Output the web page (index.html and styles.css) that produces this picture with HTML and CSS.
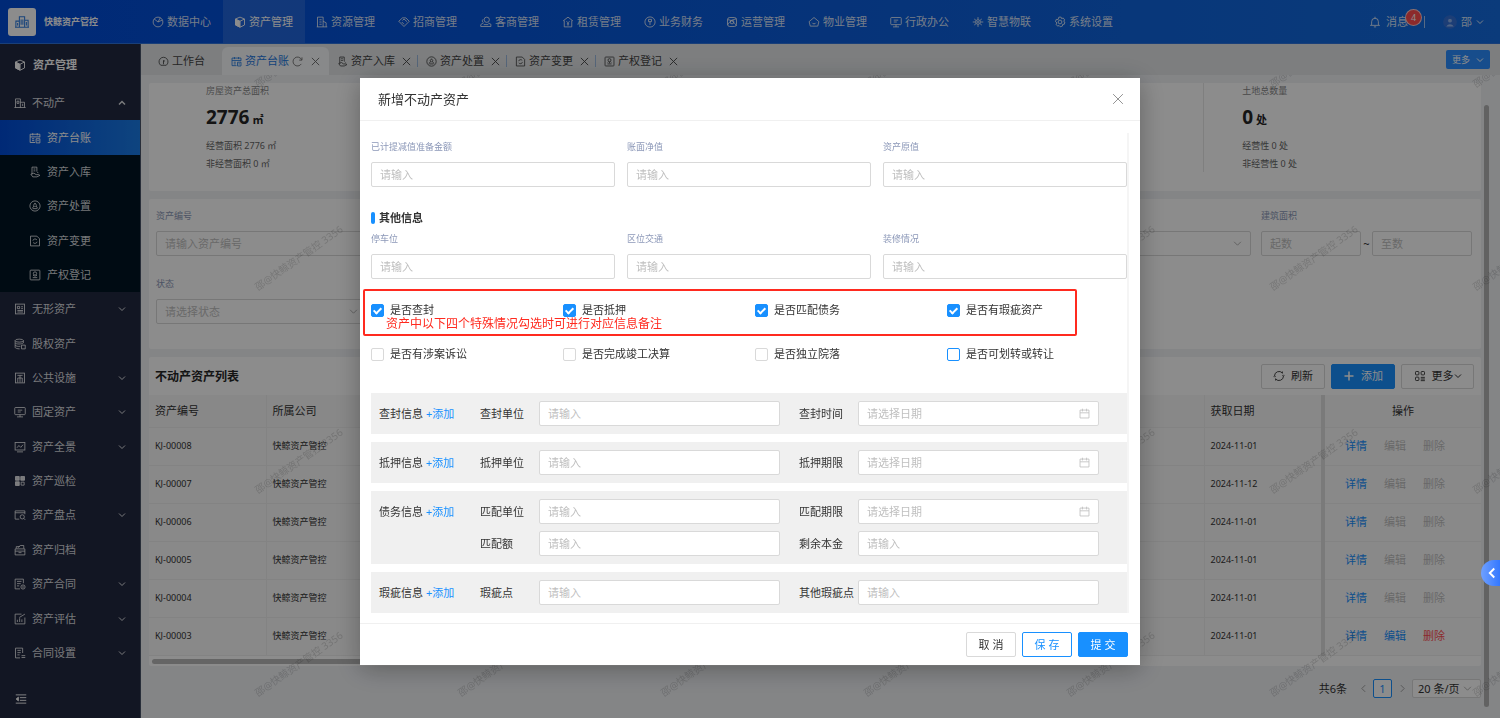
FILE: index.html
```html
<!DOCTYPE html>
<html lang="zh-CN">
<head>
    <meta charset="UTF-8">
    <meta name="viewport" content="width=device-width, initial-scale=1.0">
    <title>快鲸资产管控</title>
    <link rel="stylesheet" href="styles.css">
</head>
<body>
    <!-- icon sprite -->
    <svg class="sprite" xmlns="http://www.w3.org/2000/svg">
        <symbol id="i-logo" viewBox="0 0 16 16"><path d="M1 14V7h4M5 14V2h6v12M11 6h4v8M0 14h16M7 5v6M9 5v6M3 9v3M13 8v4"/></symbol>
        <symbol id="i-pie" viewBox="0 0 16 16"><circle cx="8" cy="8" r="6.500"/><path d="M3 4l5 4 5.500-2.500M8 8l3-5.500"/></symbol>
        <symbol id="i-cube" viewBox="0 0 16 16"><path class="fill" d="M2 4.500l5.500 2.500v7.500L2 12z"/><path d="M8 1.500l6 2.500v8l-6 3-6-3V4zM2 4l6 3 6-3M8 7v8"/></symbol>
        <symbol id="i-building" viewBox="0 0 16 16"><path d="M2 14.500v-13h7.500v13M9.500 7l4 2v5.500M1 14.500h14M4.500 5h3M4.500 8h3M4.500 11h3"/></symbol>
        <symbol id="i-hand" viewBox="0 0 16 16"><path d="M1 7l5-4.500h4.500L15 7l-7 7zM6 6l2-2 4 3.500M5 8l3 3"/></symbol>
        <symbol id="i-user" viewBox="0 0 16 16"><circle cx="9" cy="5" r="3.500"/><path d="M4 4.500C2.500 6 3 8 4.500 9L1 11.500V14h13.500v-3L11 9.500M5 11.500h6"/></symbol>
        <symbol id="i-home" viewBox="0 0 16 16"><path d="M1.500 6.500L8 1.500l6.500 5M3 6v8.500h10V6M6 7l2 2 2-2M8 9v4M6.500 10.500h3"/></symbol>
        <symbol id="i-coin" viewBox="0 0 16 16"><circle cx="8" cy="8" r="6.800"/><path d="M6 4.500h4v3H6zM8 7.500V12"/></symbol>
        <symbol id="i-atom" viewBox="0 0 16 16"><rect x="2" y="2" width="12" height="12" rx="3"/><path d="M2 5c6 0 9 4 12 8M14 4C9 4 4 8 2 12"/><circle cx="8" cy="8" r="2.500"/></symbol>
        <symbol id="i-house" viewBox="0 0 16 16"><path d="M8 2l6.500 5.500L13 13.500H3L1.500 7.500zM5.500 9c1 2 4 2 5 0"/></symbol>
        <symbol id="i-screen" viewBox="0 0 16 16"><rect x="1" y="2" width="14" height="9.500" rx="1"/><path d="M8 11.500v3M4 14.500h8M5 5.500h6M5 8h4"/></symbol>
        <symbol id="i-iot" viewBox="0 0 16 16"><circle cx="8" cy="8" r="3"/><circle cx="8" cy="8" r=".8"/><path d="M8 1.500V5M8 11v3.500M1 8h4M11 8h4M3 4l2.500 2M13 4l-2.500 2M3 12l2.500-2M13 12l-2.500-2"/></symbol>
        <symbol id="i-gear" viewBox="0 0 16 16"><circle cx="8" cy="8" r="2.500"/><path d="M6.500 1.500h3l.6 2 2.200-.8 2 2.600-1.500 1.700 1.700 1-.8 3-2.200.2-.2 2.200-3 1-1.500-1.700-2 .8-2-2.500 1.200-1.700L2 7.500l1-3 2.500.2z"/></symbol>
        <symbol id="i-bell" viewBox="0 0 16 16"><path d="M8 1v2M3.500 12V7.500a4.500 4.500 0 019 0V12M1.500 12.500h13M6.500 14.500h3"/></symbol>
        <symbol id="i-avatar" viewBox="0 0 16 16"><circle class="fill" cx="8" cy="8" r="7.200"/><circle class="face" cx="8" cy="6.500" r="2.800"/><path class="face" d="M3.500 13c1-4 8-4 9 0"/></symbol>
        <symbol id="i-down" viewBox="0 0 16 16"><path d="M2 5l6 6 6-6"/></symbol>
        <symbol id="i-up" viewBox="0 0 16 16"><path d="M2 11l6-6 6 6"/></symbol>
        <symbol id="i-left" viewBox="0 0 16 16"><path d="M11 2L5 8l6 6"/></symbol>
        <symbol id="i-right" viewBox="0 0 16 16"><path d="M5 2l6 6-6 6"/></symbol>
        <symbol id="i-close" viewBox="0 0 16 16"><path d="M1.500 1.500l13 13M14.500 1.500l-13 13"/></symbol>
        <symbol id="i-reload" viewBox="0 0 16 16"><path d="M13.500 11.500a6.500 6.500 0 11.500-6M14.500 2v4h-4"/></symbol>
        <symbol id="i-dash" viewBox="0 0 16 16"><path d="M4 13.500a6.500 6.500 0 118 0zM8 12V6M8 9l1.500-2.500"/></symbol>
        <symbol id="i-ledger" viewBox="0 0 16 16"><path d="M14.500 7V3h-13v11H8M1.500 6.500h13M5 1.500v3M11 1.500v3M4 9h3M4 11.500h3M9.500 9h5v5.500h-5zM11 11.500h2"/></symbol>
        <symbol id="i-in" viewBox="0 0 16 16"><path d="M4 11V1.500h6.500v6M6 4h2.500M6 6.500h2.500M2.500 11l4-1.500 3 2h3.500l1.500 1-4 2H5zM11 8l1.500 1.500"/></symbol>
        <symbol id="i-deal" viewBox="0 0 16 16"><circle cx="8" cy="8" r="6.800"/><path d="M8 4l2 3-2 2-2-2zM4.500 11l2-3M11.500 11l-2-3M5 11.500h6"/></symbol>
        <symbol id="i-change" viewBox="0 0 16 16"><path d="M2 1.500h8.500L14 5v9.500H2zM5.200 7.500a3 3 0 015.300-1M10.800 9a3 3 0 01-5.300 1"/></symbol>
        <symbol id="i-reg" viewBox="0 0 16 16"><rect x="1.500" y="1.500" width="13" height="13" rx="1"/><circle cx="8" cy="6" r="2.200"/><path d="M8 8.500v2M5 11.500h6M5.500 9.500l1-1.500M10.500 9.500l-1-1.500"/></symbol>
        <symbol id="i-estate" viewBox="0 0 16 16"><path d="M2 14V2.500h6.500V14M8.500 7H14v7M0.500 14h15M4 5.500h2.500v3H4zM11.500 9v3"/></symbol>
        <symbol id="i-book" viewBox="0 0 16 16"><rect x="2" y="1.500" width="12" height="13"/><path d="M4.500 4.500h3v3h-3zM9.500 5h2.500M9.500 7.500h2.500M4.500 10h7.500M4.500 12h7.500"/></symbol>
        <symbol id="i-stock" viewBox="0 0 16 16"><ellipse cx="7" cy="3.500" rx="5.500" ry="2"/><path d="M1.500 3.500v9c0 1 3 2 6 2M1.500 6.500c1 2 9 2 11 0v-3M1.500 9.500c1 1.500 4 2 7 1.500M10 9.500h5v5h-5z"/></symbol>
        <symbol id="i-public" viewBox="0 0 16 16"><rect x="2" y="1.500" width="12" height="13"/><path d="M5 14V8M8 14V4.500M11 14V8M5 8h6M4.500 4.500h7"/></symbol>
        <symbol id="i-chart" viewBox="0 0 16 16"><rect x="1.500" y="2" width="13" height="10"/><path d="M4 9l2.500-3L9 8.500 12 5M4 14.500h8"/></symbol>
        <symbol id="i-grid" viewBox="0 0 16 16"><path class="fill" d="M2 2h5v5H2zM9 2h5v5H9zM2 9h5v5H2z"/><path d="M9.500 9.500h4v4h-4z"/></symbol>
        <symbol id="i-check" viewBox="0 0 16 16"><path d="M14.500 7V2.500h-13v11H7M1.500 5h13"/><circle cx="11" cy="10.500" r="2.800"/><path d="M13 12.500l2 2"/></symbol>
        <symbol id="i-archive" viewBox="0 0 16 16"><path d="M1.500 6.500h13v8h-13zM1.500 9.500h13M6 11.500h4M3 6V3.500h4L8.500 2H13v4M5 5l3-2.500"/></symbol>
        <symbol id="i-contract" viewBox="0 0 16 16"><path d="M12.500 7V1.500h-11v13H8M4 4.500h6M4 7.500h5M4 10.500h3"/><circle cx="12" cy="12" r="2.800"/><path d="M12 10.500v3"/></symbol>
        <symbol id="i-assess" viewBox="0 0 16 16"><path d="M10 1.500H1.500v13h13V6M4.500 12V9M7.500 12V7M10.500 12V8.500M7 6l7.500-4.500"/></symbol>
        <symbol id="i-set" viewBox="0 0 16 16"><path d="M11.500 8V1.500H2v13h6M4.500 4.500h4.500M4.500 7.500h4.500M4.500 10.500h3M10 11.500h5M10 14h5"/></symbol>
        <symbol id="i-fold" viewBox="0 0 16 16"><path d="M1 2.500h14M6.500 6.200H15M6.500 9.800H15M1 13.500h14"/><path class="fill" d="M4.500 5.500v5L1.500 8z"/></symbol>
        <symbol id="i-refresh" viewBox="0 0 16 16"><path d="M2 8a6 6 0 0110.500-4M14 8a6 6 0 01-10.500 4M12.500 2v2.500M3.500 14v-2.500M1 8.500l1 1 1.500-1.500M15 7.500l-1-1L12.500 8"/></symbol>
        <symbol id="i-plus" viewBox="0 0 16 16"><path d="M8 2v12M2 8h12"/></symbol>
        <symbol id="i-apps" viewBox="0 0 16 16"><rect x="2" y="2" width="4.500" height="4.500" rx="1"/><rect x="9.500" y="2" width="4.500" height="4.500" rx="1"/><rect x="2" y="9.500" width="4.500" height="4.500" rx="1"/><path d="M9 9.800h5.500M9 12h5.500M9 14.200h5.500"/></symbol>
        <symbol id="i-date" viewBox="0 0 16 16"><path d="M1.500 3h13v11.500h-13zM1.500 7h13M5 1v4M11 1v4"/></symbol>
    </svg>

    <div class="app">
        <header class="header">
            <div class="brand">
                <span class="logo"><svg><use href="#i-logo"/></svg></span>
                <strong>快鲸资产管控</strong>
            </div>
            <nav class="nav">
                <a href="#"><svg><use href="#i-pie"/></svg>数据中心</a>
                <a href="#" class="active"><svg><use href="#i-cube"/></svg>资产管理</a>
                <a href="#"><svg><use href="#i-building"/></svg>资源管理</a>
                <a href="#"><svg><use href="#i-hand"/></svg>招商管理</a>
                <a href="#"><svg><use href="#i-user"/></svg>客商管理</a>
                <a href="#"><svg><use href="#i-home"/></svg>租赁管理</a>
                <a href="#"><svg><use href="#i-coin"/></svg>业务财务</a>
                <a href="#"><svg><use href="#i-atom"/></svg>运营管理</a>
                <a href="#"><svg><use href="#i-house"/></svg>物业管理</a>
                <a href="#"><svg><use href="#i-screen"/></svg>行政办公</a>
                <a href="#"><svg><use href="#i-iot"/></svg>智慧物联</a>
                <a href="#"><svg><use href="#i-gear"/></svg>系统设置</a>
            </nav>
            <div class="account">
                <a href="#" class="message"><svg><use href="#i-bell"/></svg>消息<span class="badge">4</span></a>
                <a href="#" class="profile"><svg class="avatar"><use href="#i-avatar"/></svg>邵<svg class="arrow"><use href="#i-down"/></svg></a>
            </div>
        </header>

        <div class="main">
            <aside class="sidebar">
                <div class="side-title"><svg><use href="#i-cube"/></svg>资产管理</div>
                <nav class="menu">
                    <a href="#"><svg><use href="#i-estate"/></svg>不动产<svg class="arrow open"><use href="#i-up"/></svg></a>
                    <div class="submenu">
                        <a href="#" class="active"><svg><use href="#i-ledger"/></svg>资产台账</a>
                        <a href="#"><svg><use href="#i-in"/></svg>资产入库</a>
                        <a href="#"><svg><use href="#i-deal"/></svg>资产处置</a>
                        <a href="#"><svg><use href="#i-change"/></svg>资产变更</a>
                        <a href="#"><svg><use href="#i-reg"/></svg>产权登记</a>
                    </div>
                    <a href="#"><svg><use href="#i-book"/></svg>无形资产<svg class="arrow"><use href="#i-down"/></svg></a>
                    <a href="#"><svg><use href="#i-stock"/></svg>股权资产</a>
                    <a href="#"><svg><use href="#i-public"/></svg>公共设施<svg class="arrow"><use href="#i-down"/></svg></a>
                    <a href="#"><svg><use href="#i-screen"/></svg>固定资产<svg class="arrow"><use href="#i-down"/></svg></a>
                    <a href="#"><svg><use href="#i-chart"/></svg>资产全景<svg class="arrow"><use href="#i-down"/></svg></a>
                    <a href="#"><svg><use href="#i-grid"/></svg>资产巡检</a>
                    <a href="#"><svg><use href="#i-check"/></svg>资产盘点<svg class="arrow"><use href="#i-down"/></svg></a>
                    <a href="#"><svg><use href="#i-archive"/></svg>资产归档</a>
                    <a href="#"><svg><use href="#i-contract"/></svg>资产合同<svg class="arrow"><use href="#i-down"/></svg></a>
                    <a href="#"><svg><use href="#i-assess"/></svg>资产评估<svg class="arrow"><use href="#i-down"/></svg></a>
                    <a href="#"><svg><use href="#i-set"/></svg>合同设置<svg class="arrow"><use href="#i-down"/></svg></a>
                </nav>
                <button type="button" class="fold" aria-label="收起"><svg><use href="#i-fold"/></svg></button>
            </aside>

            <div class="page">
                <div class="tabs">
                    <a href="#" class="tab first"><svg><use href="#i-dash"/></svg>工作台</a>
                    <a href="#" class="tab active"><svg><use href="#i-ledger"/></svg>资产台账<svg class="reload"><use href="#i-reload"/></svg><svg class="close"><use href="#i-close"/></svg></a>
                    <a href="#" class="tab"><svg><use href="#i-in"/></svg>资产入库<svg class="close"><use href="#i-close"/></svg></a>
                    <a href="#" class="tab"><svg><use href="#i-deal"/></svg>资产处置<svg class="close"><use href="#i-close"/></svg></a>
                    <a href="#" class="tab"><svg><use href="#i-change"/></svg>资产变更<svg class="close"><use href="#i-close"/></svg></a>
                    <a href="#" class="tab"><svg><use href="#i-reg"/></svg>产权登记<svg class="close"><use href="#i-close"/></svg></a>
                    <button type="button" class="tabs-more">更多<svg><use href="#i-down"/></svg></button>
                </div>

                <div class="content">
                    <section class="card stats">
                        <div class="stat">
                            <div class="stat-name">房屋资产总面积</div>
                            <div class="stat-value">2776 <small>㎡</small></div>
                            <p>经营面积 2776 ㎡</p>
                            <p>非经营面积 0 ㎡</p>
                        </div>
                        <div class="stat"></div>
                        <div class="stat"></div>
                        <div class="stat"></div>
                        <div class="stat">
                            <div class="stat-name">土地总数量</div>
                            <div class="stat-value">0 <small>处</small></div>
                            <p>经营性 0 处</p>
                            <p>非经营性 0 处</p>
                        </div>
                    </section>

                    <section class="card filters">
                        <div class="filter">
                            <label for="code">资产编号</label>
                            <input type="text" id="code" class="input" placeholder="请输入资产编号">
                        </div>
                        <div class="filter filter-type">
                            <div class="select">
                                <select class="input" aria-label="类型"><option></option></select>
                                <svg><use href="#i-down"/></svg>
                            </div>
                        </div>
                        <div class="filter filter-area">
                            <label for="area-min">建筑面积</label>
                            <div class="range">
                                <input type="text" id="area-min" class="input" placeholder="起数">
                                <span>~</span>
                                <input type="text" class="input" placeholder="至数" aria-label="至数">
                            </div>
                        </div>
                        <div class="filter">
                            <label for="state">状态</label>
                            <div class="select">
                                <select id="state" class="input"><option>请选择状态</option></select>
                                <svg><use href="#i-down"/></svg>
                            </div>
                        </div>
                    </section>

                    <section class="card list">
                        <div class="list-head">
                            <h2>不动产资产列表</h2>
                            <button type="button" class="btn"><svg><use href="#i-refresh"/></svg>刷新</button>
                            <button type="button" class="btn primary"><svg><use href="#i-plus"/></svg>添加</button>
                            <button type="button" class="btn wide"><svg><use href="#i-apps"/></svg><span>更多<svg class="caret"><use href="#i-down"/></svg></span></button>
                        </div>
                        <table>
                            <colgroup><col class="c-code"><col class="c-company"><col><col class="c-date"><col class="c-action"></colgroup>
                            <thead>
                                <tr><th>资产编号</th><th>所属公司</th><th></th><th>获取日期</th><th class="action">操作</th></tr>
                            </thead>
                            <tbody>
                                <tr><td>KJ-00008</td><td>快鲸资产管控</td><td></td><td>2024-11-01</td><td class="action"><a href="#">详情</a><a class="off">编辑</a><a class="off">删除</a></td></tr>
                                <tr><td>KJ-00007</td><td>快鲸资产管控</td><td></td><td>2024-11-12</td><td class="action"><a href="#">详情</a><a class="off">编辑</a><a class="off">删除</a></td></tr>
                                <tr><td>KJ-00006</td><td>快鲸资产管控</td><td></td><td>2024-11-01</td><td class="action"><a href="#">详情</a><a class="off">编辑</a><a class="off">删除</a></td></tr>
                                <tr><td>KJ-00005</td><td>快鲸资产管控</td><td></td><td>2024-11-01</td><td class="action"><a href="#">详情</a><a class="off">编辑</a><a class="off">删除</a></td></tr>
                                <tr><td>KJ-00004</td><td>快鲸资产管控</td><td></td><td>2024-11-01</td><td class="action"><a href="#">详情</a><a class="off">编辑</a><a class="off">删除</a></td></tr>
                                <tr><td>KJ-00003</td><td>快鲸资产管控</td><td></td><td>2024-11-01</td><td class="action"><a href="#">详情</a><a href="#">编辑</a><a href="#" class="danger">删除</a></td></tr>
                            </tbody>
                        </table>
                        <div class="hscroll"></div>
                    </section>

                    <div class="pager">
                        <span>共6条</span>
                        <button type="button" class="turn" aria-label="上一页"><svg><use href="#i-left"/></svg></button>
                        <button type="button" class="num">1</button>
                        <button type="button" class="turn" aria-label="下一页"><svg><use href="#i-right"/></svg></button>
                        <div class="select">
                            <select class="input" aria-label="每页条数"><option>20 条/页</option></select>
                            <svg><use href="#i-down"/></svg>
                        </div>
                    </div>
                </div>
                <div class="vscroll"></div>

                <svg class="watermark" aria-hidden="true">
                    <defs>
                        <pattern id="wm" width="203" height="203" patternUnits="userSpaceOnUse" x="113" y="41">
                            <text x="4" y="175" transform="rotate(-35 4 175)">邵@快鲸资产管控 3356</text>
                        </pattern>
                    </defs>
                    <rect width="100%" height="100%" fill="url(#wm)"/>
                </svg>
            </div>
        </div>
    </div>

    <div class="mask">
        <div class="modal" role="dialog" aria-labelledby="modal-title">
            <div class="modal-head">
                <h3 id="modal-title">新增不动产资产</h3>
                <button type="button" class="modal-close" aria-label="关闭"><svg><use href="#i-close"/></svg></button>
            </div>
            <form class="modal-body">
                <div class="fields">
                    <div class="field"><label for="f1">已计提减值准备金额</label><input type="text" id="f1" class="input" placeholder="请输入"></div>
                    <div class="field"><label for="f2">账面净值</label><input type="text" id="f2" class="input" placeholder="请输入"></div>
                    <div class="field"><label for="f3">资产原值</label><input type="text" id="f3" class="input" placeholder="请输入"></div>
                </div>
                <h4>其他信息</h4>
                <div class="fields">
                    <div class="field"><label for="f4">停车位</label><input type="text" id="f4" class="input" placeholder="请输入"></div>
                    <div class="field"><label for="f5">区位交通</label><input type="text" id="f5" class="input" placeholder="请输入"></div>
                    <div class="field"><label for="f6">装修情况</label><input type="text" id="f6" class="input" placeholder="请输入"></div>
                </div>
                <div class="checks">
                    <label><input type="checkbox" checked>是否查封</label>
                    <label><input type="checkbox" checked>是否抵押</label>
                    <label><input type="checkbox" checked>是否匹配债务</label>
                    <label><input type="checkbox" checked>是否有瑕疵资产</label>
                    <label><input type="checkbox">是否有涉案诉讼</label>
                    <label><input type="checkbox">是否完成竣工决算</label>
                    <label><input type="checkbox">是否独立院落</label>
                    <label><input type="checkbox" class="hover">是否可划转或转让</label>
                    <div class="note">资产中以下四个特殊情况勾选时可进行对应信息备注</div>
                </div>

                <div class="blocks">
                    <div class="block">
                        <div class="block-name">查封信息 <a href="#">+添加</a></div>
                        <label for="b1">查封单位</label><input type="text" id="b1" class="input" placeholder="请输入">
                        <label for="b2">查封时间</label><div class="date"><input type="text" id="b2" class="input" placeholder="请选择日期"><svg><use href="#i-date"/></svg></div>
                    </div>
                    <div class="block">
                        <div class="block-name">抵押信息 <a href="#">+添加</a></div>
                        <label for="b3">抵押单位</label><input type="text" id="b3" class="input" placeholder="请输入">
                        <label for="b4">抵押期限</label><div class="date"><input type="text" id="b4" class="input" placeholder="请选择日期"><svg><use href="#i-date"/></svg></div>
                    </div>
                    <div class="block">
                        <div class="block-name">债务信息 <a href="#">+添加</a></div>
                        <label for="b5">匹配单位</label><input type="text" id="b5" class="input" placeholder="请输入">
                        <label for="b6">匹配期限</label><div class="date"><input type="text" id="b6" class="input" placeholder="请选择日期"><svg><use href="#i-date"/></svg></div>
                        <label for="b7" class="next">匹配额</label><input type="text" id="b7" class="input" placeholder="请输入">
                        <label for="b8">剩余本金</label><input type="text" id="b8" class="input" placeholder="请输入">
                    </div>
                    <div class="block">
                        <div class="block-name">瑕疵信息 <a href="#">+添加</a></div>
                        <label for="b9">瑕疵点</label><input type="text" id="b9" class="input" placeholder="请输入">
                        <label for="b10">其他瑕疵点</label><input type="text" id="b10" class="input" placeholder="请输入">
                    </div>
                </div>
            </form>
            <div class="modal-foot">
                <button type="button" class="btn">取 消</button>
                <button type="button" class="btn ghost">保 存</button>
                <button type="button" class="btn primary">提 交</button>
            </div>
        </div>
    </div>

    <button type="button" class="drawer" aria-label="展开"><svg><use href="#i-left"/></svg></button>
</body>
</html>
```

FILE: styles.css
```css
* {
    box-sizing: border-box;
}
body {
    margin: 0;
    font-family: "Noto Sans", "Noto Sans CJK SC", sans-serif;
    font-size: 11px;
    line-height: 16px;
    color: #333;
    overflow: hidden;
}
a {
    color: inherit;
    text-decoration: none;
}
h2, h3, h4, p {
    margin: 0;
}
button, input, select {
    font: inherit;
    margin: 0;
}
svg {
    width: 12px;
    height: 12px;
    flex: none;
    fill: none;
    stroke: currentColor;
    stroke-width: 1.2;
}
.sprite {
    display: none;
}
.fill {
    fill: currentColor;
}
.app {
    display: flex;
    flex-direction: column;
    height: 100vh;
}

/* header */
.header {
    display: flex;
    align-items: center;
    height: 44px;
    flex: none;
    color: rgba(255,255,255,0.85);
    background: linear-gradient(90deg, #004cd8, #146ce0);
    border-bottom: 1px solid #2f73dc;
}
.brand {
    display: flex;
    align-items: center;
    gap: 8px;
    width: 141px;
    padding-left: 8px;
    font-size: 9px;
    color: #fff;
}
.logo {
    display: flex;
    align-items: center;
    justify-content: center;
    width: 28px;
    height: 28px;
    border-radius: 3px;
    background: #fff;
    color: #2f7de0;
}
.logo svg {
    width: 14px;
    height: 14px;
}
.nav {
    display: flex;
    height: 100%;
}
.nav a {
    display: flex;
    align-items: center;
    gap: 3px;
    width: 82px;
    padding-left: 11px;
}
.nav .active {
    background: rgba(255,255,255,0.12);
    color: #fff;
}
.account {
    display: flex;
    align-items: center;
    margin-left: auto;
    padding-right: 16px;
}
.message {
    display: flex;
    align-items: center;
    gap: 5px;
    position: relative;
    padding-right: 16px;
    border-right: 1px solid rgba(255,255,255,0.6);
    line-height: 12px;
}
.badge {
    position: absolute;
    right: 2px;
    top: -7px;
    width: 17px;
    height: 17px;
    border: 1px solid rgba(255,255,255,0.7);
    border-radius: 50%;
    background: #ff4d4f;
    color: #fff;
    font-size: 9px;
    line-height: 15px;
    text-align: center;
}
.profile {
    display: flex;
    align-items: center;
    gap: 4px;
    margin-left: 18px;
}
.avatar {
    width: 14px;
    height: 14px;
    color: #3471d8;
}
.face {
    fill: #8fb4f0;
}
.profile .arrow {
    width: 8px;
    height: 8px;
    stroke-width: 2;
}

/* sidebar */
.main {
    display: flex;
    flex: 1;
    min-height: 0;
}
.sidebar {
    display: flex;
    flex-direction: column;
    width: 141px;
    flex: none;
    background: #212840;
    color: rgba(255,255,255,0.85);
    border-right: 1px solid #4a5468;
}
.side-title {
    display: flex;
    align-items: center;
    gap: 7px;
    height: 42px;
    padding-left: 14px;
    color: #fff;
    font-weight: bold;
}
.menu {
    display: flex;
    flex-direction: column;
    flex: 1;
}
.menu a {
    display: flex;
    align-items: center;
    gap: 6px;
    flex: 1;
    padding: 0 14px;
}
.menu svg {
    width: 12px;
    height: 12px;
}
.menu .arrow {
    width: 8px;
    height: 8px;
    margin-left: auto;
    stroke-width: 2;
}
.menu .open {
    stroke-width: 3;
}
.submenu {
    display: flex;
    flex-direction: column;
    flex: 5;
    background: #001424;
}
.submenu a {
    padding-left: 29px;
}
.submenu .active {
    color: #fff;
    background: linear-gradient(90deg, #004cd8, #1a7ce8);
}
.fold {
    display: flex;
    align-items: center;
    height: 48px;
    padding: 9px 0 0 15px;
    border: 0;
    background: none;
    color: #fff;
}

/* page tabs */
.page {
    display: flex;
    flex-direction: column;
    flex: 1;
    min-width: 0;
    position: relative;
    background: #f0f2f5;
}
.tabs {
    display: flex;
    align-items: flex-end;
    height: 31px;
    flex: none;
    padding-right: 10px;
    background: #e3e6e8;
    color: #444;
}
.tab {
    display: flex;
    align-items: center;
    gap: 3px;
    width: 89px;
    height: 28px;
    padding-left: 8px;
}
.tab svg {
    width: 11px;
    height: 11px;
}
.tab .close {
    width: 9px;
    height: 9px;
    margin-left: 4px;
    stroke-width: 1.6;
}
.tab.first {
    width: 81px;
    padding-left: 17px;
}
.tab.active {
    width: 107px;
    padding-left: 9px;
    border-radius: 6px 6px 0 0;
    background: #f8f9fb;
    color: #1f78e0;
}
.tab.active svg:not(:first-child) {
    color: #666;
}
.tab.active .close {
    margin-left: 5px;
}
.tab + .tab:not(.active) {
    background: linear-gradient(#9bb9de, #9bb9de) right center / 1px 12px no-repeat;
}
.tab.tab:nth-of-type(6) {
    background: none;
}
.tabs-more {
    display: flex;
    align-items: center;
    gap: 6px;
    height: 19px;
    margin: 0 0 6px auto;
    padding: 0 6px;
    border: 0;
    border-radius: 2px;
    background: #2a8cff;
    color: #fff;
    font-size: 9px;
}
.tabs-more svg {
    width: 8px;
    height: 8px;
    stroke-width: 2;
}

/* content */
.content {
    display: flex;
    flex-direction: column;
    gap: 8px;
    padding: 8px 19px 0 8px;
}
.card {
    background: #fff;
    border-radius: 2px;
}
.input {
    display: block;
    width: 100%;
    min-width: 0;
    height: 25px;
    padding: 0 8px;
    border: 1px solid #d9d9d9;
    border-radius: 2px;
    background: #fff;
    color: #333;
    outline: none;
    appearance: none;
}
.input::placeholder {
    color: #bfbfbf;
}
.select {
    position: relative;
}
.select .input {
    color: #bfbfbf;
}
.select svg, .date svg {
    position: absolute;
    right: 9px;
    top: 8px;
    width: 9px;
    height: 9px;
    color: #aaa;
    stroke-width: 1.6;
    pointer-events: none;
}
.stats {
    display: grid;
    grid-template-columns: repeat(5, 1fr);
    height: 108px;
    padding: 0 19px;
    font-size: 9px;
}
.stat {
    height: 89px;
    padding-left: 38px;
    color: #666;
}
.stat + .stat {
    border-left: 1px solid #e8e8e8;
}
.stat-name {
    color: #888;
}
.stat-value {
    margin: 6px 0 5px;
    font-size: 19px;
    line-height: 24px;
    font-weight: bold;
    color: #262626;
}
.stat-value small {
    font-size: 11px;
    margin-left: -2px;
}
.stat p {
    line-height: 18px;
}
.filters {
    display: grid;
    grid-template-columns: repeat(6, 1fr);
    grid-template-rows: 68px 1fr;
    gap: 0 10px;
    height: 150px;
    padding: 9px 9px 0 7px;
}
.filter label, .field label {
    display: block;
    margin-bottom: 7px;
    font-size: 9px;
    color: #8c98b8;
}
.filter-type {
    grid-column: 5;
    padding-top: 23px;
}
.filter-area {
    grid-column: 6;
}
.range {
    display: grid;
    grid-template-columns: 1fr 11px 1fr;
    align-items: center;
    text-align: center;
}
.list {
    height: 309px;
}
.list-head {
    display: flex;
    align-items: center;
    gap: 6px;
    height: 38px;
    padding: 0 7px 0 6px;
}
.list-head h2 {
    margin-right: auto;
    padding-top: 2px;
    font-size: 12px;
    color: #262626;
}
.btn {
    display: flex;
    align-items: center;
    justify-content: center;
    gap: 6px;
    width: 64px;
    height: 25px;
    padding: 0;
    border: 1px solid #d9d9d9;
    border-radius: 2px;
    background: #fff;
    color: #333;
}
.btn.primary {
    border-color: #1890ff;
    background: #1890ff;
    color: #fff;
}
.btn.primary svg {
    stroke-width: 2;
}
.btn.ghost {
    border-color: #1890ff;
    color: #1890ff;
}
.btn.wide {
    width: 73px;
}
.btn .caret {
    width: 8px;
    height: 8px;
    stroke-width: 2;
}
table {
    width: 100%;
    table-layout: fixed;
    border-collapse: collapse;
    background: #fafafa;
}
.c-code {
    width: 117px;
}
.c-company {
    width: 160px;
}
.c-date {
    width: 119px;
}
.c-action {
    width: 158px;
}
th, td {
    height: 38px;
    padding: 0 6px;
    border-bottom: 1px solid #efefef;
    border-right: 1px solid #efefef;
    text-align: left;
    font-size: 9px;
}
th {
    height: 32px;
    font-size: 11px;
    font-weight: normal;
    background: #f7f7f7;
}
.action {
    border-left: 4px solid #dedede;
    border-right: 0;
    padding: 0;
    text-align: center;
    font-size: 11px;
}
td.action {
    padding-right: 16px;
}
.action a {
    color: #1890ff;
}
.action a + a {
    margin-left: 17px;
}
.action .off {
    color: #bfbfbf;
}
.action .danger {
    color: #ff4d4f;
}
.hscroll {
    width: 60%;
    height: 5px;
    margin: 3px 3px 0;
    border-radius: 3px;
    background: #b8b8b8;
}
.vscroll {
    position: absolute;
    right: 11px;
    top: 61px;
    bottom: 11px;
    width: 5px;
    border-radius: 3px;
    background: #b3b3b3;
}
.pager {
    display: flex;
    align-items: center;
    justify-content: flex-end;
    gap: 6px;
    padding-top: 5px;
}
.pager .turn, .pager .num {
    display: flex;
    align-items: center;
    justify-content: center;
    width: 8px;
    height: 19px;
    padding: 0;
    border: 0;
    background: none;
    color: #999;
}
.pager span {
    margin-right: 6px;
}
.pager .turn svg {
    width: 9px;
    height: 9px;
    stroke-width: 1.6;
}
.pager .num {
    width: 19px;
    border: 1px solid #1890ff;
    border-radius: 2px;
    background: #fff;
    color: #1890ff;
}
.pager .input {
    width: 69px;
    height: 19px;
    padding: 0 5px;
    color: #333;
}
.pager .select svg {
    top: 5px;
}
.watermark {
    position: absolute;
    left: 0;
    top: 31px;
    width: 100%;
    height: calc(100% - 31px);
    stroke: none;
    pointer-events: none;
}
.watermark text {
    fill: rgba(0,0,0,0.16);
    font-size: 10px;
}

/* modal */
.mask {
    position: fixed;
    inset: 0;
    display: flex;
    align-items: flex-start;
    justify-content: center;
    padding-top: 78px;
    background: rgba(0,0,0,0.45);
}
.modal {
    width: 52%;
    background: #fff;
    box-shadow: 0 4px 24px rgba(0,0,0,0.3);
}
.modal-head {
    display: flex;
    align-items: center;
    justify-content: space-between;
    height: 43px;
    padding: 0 16px 0 18px;
    border-bottom: 1px solid #f0f0f0;
}
.modal-head h3 {
    font-size: 13px;
    font-weight: normal;
}
.modal-close {
    display: flex;
    padding: 0;
    border: 0;
    background: none;
    color: #888;
}
.modal-body {
    margin: 12px 11px 10px;
    padding: 6px 0 0;
    border-right: 2px solid #f5f5f5;
}
.fields {
    display: grid;
    grid-template-columns: repeat(3, 1fr);
    gap: 12px;
}
.modal h4 {
    display: flex;
    align-items: center;
    gap: 4px;
    margin: 23px 0 5px;
    line-height: 16px;
    font-size: 11px;
}
.modal h4::before {
    content: "";
    width: 4px;
    height: 12px;
    border-radius: 2px;
    background: #1890ff;
}
.checks {
    display: grid;
    grid-template-columns: repeat(4, 1fr);
    gap: 28px 0;
    position: relative;
    margin: 23px -12px 0 0;
}
.checks label {
    display: flex;
    align-items: center;
    gap: 6px;
}
.checks input {
    width: 13px;
    height: 13px;
    border: 1px solid #d9d9d9;
    border-radius: 2px;
    background: #fff;
    appearance: none;
}
.checks input:checked {
    border-color: #1890ff;
    background: #1890ff;
}
.checks input:checked::after {
    content: "";
    display: block;
    box-sizing: border-box;
    width: 5px;
    height: 8px;
    margin: 1px 0 0 3px;
    border: solid #fff;
    border-width: 0 2px 2px 0;
    transform: rotate(45deg);
}
.checks .hover {
    border-color: #1890ff;
}
.note {
    position: absolute;
    left: -8px;
    top: -13px;
    width: 93%;
    height: 47px;
    padding: 25px 0 0 21px;
    border: 2px solid #ff2a1f;
    border-radius: 2px;
    color: #ff2a1f;
    font-size: 12px;
    pointer-events: none;
}
.blocks {
    display: flex;
    flex-direction: column;
    gap: 8px;
    margin-top: 31px;
}
.block {
    display: grid;
    grid-template-columns: 101px 59px 1fr 78px 1fr;
    align-items: center;
    row-gap: 7px;
    padding: 8px 28px 8px 8px;
    background: #f0f0f0;
}
.block a {
    color: #1890ff;
}
.block .input + label {
    padding-left: 19px;
}
.block label.next {
    grid-column: 2;
    padding-left: 0;
}
.date {
    position: relative;
}
.date svg {
    top: 7px;
    width: 11px;
    height: 11px;
    color: #bfbfbf;
    stroke-width: 1.2;
}
.modal-foot {
    display: flex;
    justify-content: flex-end;
    gap: 6px;
    padding: 8px 12px 8px 0;
    border-top: 1px solid #f0f0f0;
}
.modal-foot .btn {
    width: 50px;
}
.drawer {
    display: flex;
    align-items: center;
    position: fixed;
    right: 0;
    top: 78%;
    width: 19px;
    height: 26px;
    padding: 0 0 0 5px;
    border: 0;
    border-radius: 13px 0 0 13px;
    background: linear-gradient(90deg, #6fa0ff, #3478ff);
    color: #fff;
}
.drawer svg {
    stroke-width: 2.5;
}
```
